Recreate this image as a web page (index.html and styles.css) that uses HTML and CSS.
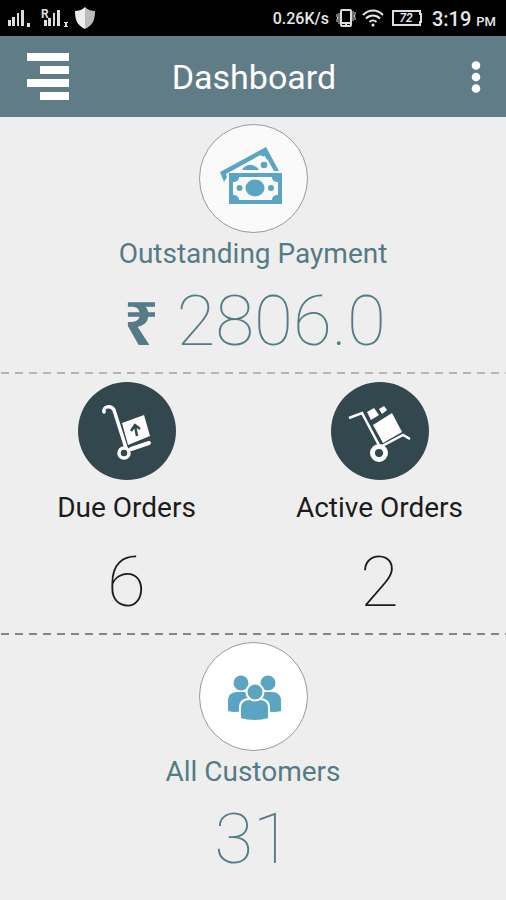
FILE: index.html
```html
<!DOCTYPE html>
<html lang="en">
  <head>
    <meta charset="utf-8">
    <meta name="viewport" content="width=device-width, initial-scale=1">
    <title>Dashboard</title>
    <link rel="stylesheet" href="styles.css">
  </head>
  <body>
    <div class="status-bar">
      <div class="status-group">
        <svg class="signal" width="24" height="20" viewBox="0 0 24 20" fill="#ddd">
          <path d="M1 12h3v6H1zM5 9h3v9H5zM10 5h2v13h-2zM14 2h3v16h-3zM20 15h3v4h-3z"/>
        </svg>
        <svg class="signal-roaming" width="30" height="22" viewBox="0 0 30 22" fill="#ddd">
          <text x="1" y="11" font-size="12" font-weight="700">R</text>
          <path d="M4 13h3v6H4zM8 11h3v8H8zM13 6h2v13h-2zM17 3h3v16h-3zM24 15h4v1h-1v3h1v1h-4v-1h1v-3h-1z"/>
        </svg>
        <svg width="22" height="22" viewBox="0 0 22 22">
          <path d="M11 0C8 3 4 4 1 4c0 9 2 14 10 18z" fill="#eee"/>
          <path d="M11 0c3 3 7 4 10 4 0 9-2 14-10 18z" fill="#bbb"/>
        </svg>
      </div>
      <div class="status-group">
        <span class="speed">0.26K/s</span>
        <svg class="vibrate" width="20" height="18" viewBox="0 0 20 18" fill="none" stroke="#ddd">
          <rect x="5" y="1" width="10" height="16" rx="1" stroke-width="2"/>
          <path d="M5 14h10M9 15.500h2" stroke-width="2"/>
          <path d="M1 5v3l1 1-1 1v3M3 4v11M17 2v10M19 3v3l-1 1 1 1v3"/>
        </svg>
        <svg class="wifi" width="22" height="18" viewBox="0 0 22 18" fill="none" stroke="#e6e6e6" stroke-width="2">
          <path d="M1 6C7 0 15 0 21 6M4 9.500c4-4 10-4 14 0M7.500 13c2-2 5-2 7 0"/>
          <circle cx="11" cy="16" r="1.500" fill="#e6e6e6" stroke="none"/>
        </svg>
        <svg class="battery" width="30" height="16" viewBox="0 0 30 16">
          <path d="M1 1h27v3h1v8h-1v3H1z" fill="none" stroke="#ddd" stroke-width="2"/>
          <text x="14" y="12" font-size="12" font-style="italic" font-weight="500" text-anchor="middle" fill="#eee">72</text>
        </svg>
        <span class="clock">3:19 <small>PM</small></span>
      </div>
    </div>

    <header class="app-bar">
      <button class="menu-btn" type="button" aria-label="Menu">
        <svg width="42" height="48" viewBox="0 0 42 48" fill="#fff">
          <path d="M0 0h42v8H0zM13 13h29v8H13zM0 26h42v8H0zM13 39h29v8H13z"/>
        </svg>
      </button>
      <h1 class="title">Dashboard</h1>
      <button class="more-btn" type="button" aria-label="More options">
        <svg width="10" height="32" viewBox="0 0 10 32" fill="#fff">
          <circle cx="5" cy="4.500" r="4.300"/>
          <circle cx="5" cy="16" r="4.300"/>
          <circle cx="5" cy="27.500" r="4.300"/>
        </svg>
      </button>
    </header>

    <main>
      <section class="panel dashed-light">
        <div class="card">
          <div class="icon-light soft">
            <svg width="64" height="60" viewBox="0 0 64 60" fill="#5ba5c3">
              <path d="M-1 23 45-2l13 24h-5L43 4 5 25l1 3-3 5z"/>
              <path d="M38 5l6-3 5 9c-3 0-4-1-5-4-2 1-4 0-6-2zM21 21c3-6 13-7 17 0z"/>
              <circle cx="43" cy="16" r="3.300"/>
              <path d="M8 24h53v31H8z"/>
              <path d="M18 28h33c0 3 2 5 6 5v13c-4 0-6 2-6 5H18c0-3-2-5-6-5V33c4 0 6-2 6-5z" fill="#fafafa"/>
              <ellipse cx="34" cy="39" rx="9.500" ry="8.500"/>
              <circle cx="18.500" cy="39" r="3"/>
              <circle cx="50" cy="39" r="3"/>
            </svg>
          </div>
          <h2 class="label">Outstanding Payment</h2>
          <p class="value"><span class="rupee">₹</span>2806.0</p>
        </div>
      </section>

      <section class="panel orders dashed-dark">
        <div class="card dark">
          <div class="icon-dark">
            <svg width="98" height="98" viewBox="0 0 98 98" fill="none" stroke="#fff">
              <path d="M26 30c-1-6 7-7 10-2l12 38" stroke-width="3.500" stroke-linecap="round"/>
              <path d="M53 67l18-6" stroke-width="4" stroke-linecap="round"/>
              <path d="M44 41l22-8 6 21-22 9z" fill="#fff" stroke="none"/>
              <path d="M59 54l-2-10M53 49l4-6 5 4" stroke="#33474f" stroke-width="2.500"/>
              <circle cx="46" cy="71" r="5" stroke-width="3.500"/>
            </svg>
          </div>
          <h2 class="label">Due Orders</h2>
          <p class="value">6</p>
        </div>
        <div class="card dark">
          <div class="icon-dark">
            <svg width="98" height="98" viewBox="0 0 98 98" fill="none" stroke="#fff">
              <path d="M18 36l13-5 18 34 23-12 7 4" stroke-width="2.500"/>
              <g fill="#fff" stroke="none">
                <path d="M42 43l19-12 10 19-19 11z"/>
                <path d="M36 30l7-4 5 7-8 5zM48 27l5-3 3 4-5 4z"/>
              </g>
              <circle cx="48" cy="71" r="6.500" stroke-width="5"/>
            </svg>
          </div>
          <h2 class="label">Active Orders</h2>
          <p class="value">2</p>
        </div>
      </section>

      <section class="panel">
        <div class="card">
          <div class="icon-light">
            <svg class="people" width="56" height="48" viewBox="0 0 56 48" fill="#5ba5c3">
              <circle cx="15" cy="9" r="7.500"/>
              <circle cx="42" cy="9" r="7.500"/>
              <path d="M2 37V26c0-5 4-8 9-8h8l9 4 9-4h9c5 0 9 3 9 8v11q-7 2-14 0H16q-7 2-14 0z"/>
              <g stroke="#fff" stroke-width="2">
                <path d="M14 45V33c0-5 4-8 9-8h11c5 0 9 3 9 8v12q-14 4-29 0z"/>
                <circle cx="29" cy="18" r="8.500"/>
              </g>
            </svg>
          </div>
          <h2 class="label">All Customers</h2>
          <p class="value">31</p>
        </div>
      </section>
    </main>
  </body>
</html>
```
FILE: styles.css
```css
* { box-sizing: border-box }

body {
    margin: 0;
    background: #eee;
    font-family: Roboto, "Liberation Sans", sans-serif;
}

svg { display: block }

h1, h2, p { margin: 0 }

/* phone status bar */
.status-bar {
    display: flex;
    justify-content: space-between;
    align-items: center;
    height: 36px;
    padding: 0 10px 0 7px;
    background: #000;
    color: #e6e6e6;
}

.status-group {
    display: flex;
    align-items: center;
}

.signal { margin-right: 9px }
.signal-roaming { margin-right: 4px }

.speed {
    font-size: 16px;
    font-weight: 500;
}

.vibrate { margin: 0 6px 0 7px }
.battery { margin: 0 10px 0 8px }

.clock {
    padding-top: 2px;
    font-size: 20px;
    font-weight: 500;
}

.clock small { font-size: 13px }

/* app bar */
.app-bar {
    display: grid;
    grid-template-columns: 60px 1fr 60px;
    align-items: center;
    height: 81px;
    padding: 0 25px 0 27px;
    background: #607d87;
    color: #fff;
}

.app-bar button {
    padding: 0;
    border: 0;
    background: none;
    cursor: pointer;
}

.more-btn { justify-self: end }
.menu-btn { justify-self: start }

.title {
    font-size: 34px;
    font-weight: 400;
    line-height: 40px;
    text-align: center;
}

/* dashboard panels */
.panel {
    display: flex;
    padding: 7px 0 11px;
    background: repeating-linear-gradient(90deg, transparent 0 1px, var(--dash, transparent) 1px 9px, transparent 9px 14px) bottom / 100% 2px no-repeat;
}

.dashed-light { --dash: #b4b4b4 }
.dashed-dark { --dash: #858585 }

.card {
    display: flex;
    flex: 1;
    flex-direction: column;
    align-items: center;
    color: #557b86;
}

.icon-light, .icon-dark {
    display: flex;
    justify-content: center;
    align-items: center;
    border-radius: 50%;
}

.icon-light {
    width: 109px;
    height: 109px;
    margin-bottom: 3px;
    border: 1px solid #999;
    background: #fff;
}

.soft { background: #fafafa }
.soft svg { overflow: visible }

.icon-dark {
    width: 98px;
    height: 98px;
    margin-bottom: 10px;
    background: #33474f;
}

.people { margin: 2px 0 0 2px }

.label {
    font-size: 28px;
    font-weight: 400;
    line-height: 36px;
}

.value {
    margin-top: 7px;
    font-size: 71px;
    font-weight: 100;
    line-height: 84px;
}

.rupee {
    margin: 0 18px 0 4px;
    font-family: "Noto Sans", sans-serif;
    font-size: 60px;
    font-weight: 700;
    line-height: 1;
}

.orders { padding-top: 8px }

.dark { color: #1c1c1c }
.dark .value { margin-top: 14px }
```
